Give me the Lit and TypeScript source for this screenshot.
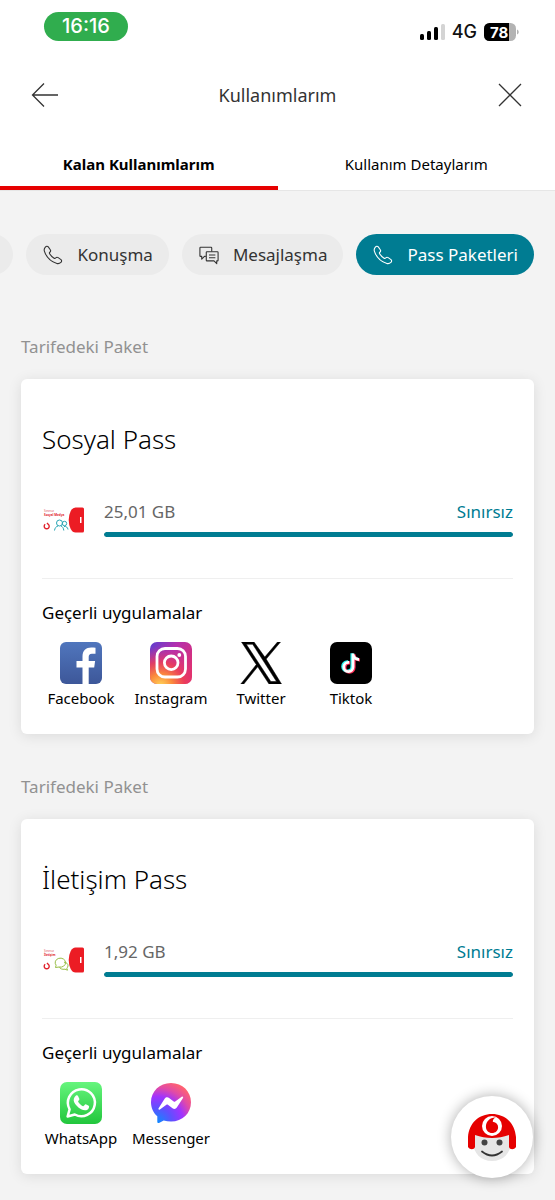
import { LitElement, html, css, svg } from "lit";
import { customElement, property, state } from "lit/decorators.js";

const phoneIcon = html`<svg class="icon" viewBox="0 0 22 22" aria-hidden="true">
  <path d="M2.6 2.3C3.6 1.2 5 1.1 5.8 2.1L8 5.2c.7 1 .5 2-.5 2.8-.6.5-.6 1-.2 1.6 1.200 2 2.900 3.700 4.900 4.900.7.4 1.200.4 1.700-.2.8-.9 1.800-1.100 2.800-.4l3.100 2.200c1 .8.900 2.100-.1 3-1.200 1.100-2.700 1.700-4.400 1.200C8.700 18.300 3.500 12.900 1.500 6.700 1 5 1.500 3.500 2.600 2.300Z" />
</svg>`;

const chatIcon = html`<svg class="icon" viewBox="0 0 22 22" aria-hidden="true">
  <path d="M7.500 12.500H6L3 15.500v-3H1.700a.7.7 0 0 1-.7-.7V3.200c0-.4.300-.7.700-.7h11.600c.4 0 .7.300.7.7v4" />
  <path d="M8.700 7.500h11.600c.4 0 .7.300.7.700v8.600c0 .4-.300.7-.7.7H19.500v3l-3-3H8.700a.7.7 0 0 1-.7-.7V8.200c0-.4.300-.7.700-.7Z" />
  <path d="M11 11h7M11 14h7" />
</svg>`;

const appIcons: Record<string, unknown> = {
  Facebook: html`<svg class="logo" viewBox="0 0 42 42" aria-hidden="true">
    <defs><linearGradient id="fb" x1="0" y1="0" x2="0" y2="1"><stop offset="0" stop-color="#5076bd" /><stop offset="1" stop-color="#3d5799" /></linearGradient></defs>
    <rect width="42" height="42" rx="6" fill="url(#fb)" />
    <path fill="#fff" d="M22.500 42V25.500h-6V19h6v-4.500C22.500 8.500 26 5.500 31.200 5.500c1.600 0 3.100.1 4.300.3v5.900h-3.500c-2.600 0-3.300 1.300-3.300 3.300v4h6.400l-.9 6.500h-5.500V42Z" />
  </svg>`,
  Instagram: html`<svg class="logo" viewBox="0 0 42 42" aria-hidden="true">
    <defs>
      <linearGradient id="ig1" x1="0" y1="0" x2="1" y2=".7"><stop offset="0" stop-color="#5c3fd0" /><stop offset=".45" stop-color="#b32fae" /><stop offset="1" stop-color="#e2306c" /></linearGradient>
      <radialGradient id="ig2" cx=".25" cy="1.050" r=".95"><stop offset="0" stop-color="#ffd95a" /><stop offset=".3" stop-color="#fb8a3c" /><stop offset=".6" stop-color="#ee3f55" stop-opacity=".85" /><stop offset="1" stop-color="#d62f8a" stop-opacity="0" /></radialGradient>
    </defs>
    <rect width="42" height="42" rx="7" fill="url(#ig1)" />
    <rect width="42" height="42" rx="7" fill="url(#ig2)" />
    <rect x="7" y="6.500" width="28.500" height="28.500" rx="8" fill="none" stroke="#fff" stroke-width="2.800" />
    <circle cx="21.200" cy="20.800" r="6.800" fill="none" stroke="#fff" stroke-width="2.800" />
    <circle cx="29.300" cy="13" r="1.900" fill="#fff" />
  </svg>`,
  Twitter: html`<svg class="logo" viewBox="0 0 42 42" aria-hidden="true">
    <path stroke="#000" stroke-width=".5" d="M1.500 0h12.500l10.800 15.100L37.500 0h3L26.200 17.100 41.500 42H29L17.700 24.700 3.800 42H.8L16.300 22.600Zm4.800 2.300 24.500 37.200h5.700L12.700 2.300Z" fill-rule="evenodd" />
  </svg>`,
  Tiktok: html`<svg class="logo" viewBox="0 0 42 42" aria-hidden="true">
    <rect width="42" height="42" rx="7" />
    <g fill="none" stroke-width="3.200">
      <path stroke="#25f4ee" d="M22 11.300v13.200a4.600 4.600 0 1 1-4.600-4.600h.8M22 12c.6 2.900 2.800 4.800 6 5" />
      <path stroke="#fe2c55" d="M24 12.300v13.200A4.600 4.600 0 1 1 19.400 20.900h.8M24 13c.6 2.900 2.800 4.800 6 5" />
      <path stroke="#fff" stroke-width="2.800" d="M23 11.500V25a4.600 4.600 0 1 1-4.600-4.600h.8M23 12.500c.6 2.900 2.800 4.800 6 5" />
    </g>
  </svg>`,
  WhatsApp: html`<svg class="logo" viewBox="0 0 42 42" aria-hidden="true">
    <defs><linearGradient id="wa" x1="0" y1="0" x2="0" y2="1"><stop offset="0" stop-color="#66f57d" /><stop offset="1" stop-color="#22c63c" /></linearGradient></defs>
    <rect width="42" height="42" rx="7" fill="url(#wa)" />
    <path fill="none" stroke="#fff" stroke-width="2.500" stroke-linejoin="round" d="m7.600 34.500 2-7.200a13.500 13.500 0 1 1 5.200 5.200Z" />
    <path fill="#fff" d="M16 13.500c.5-.5 1.500-.5 1.900.2l1.500 3.200c.3.700-1.300 2-1.300 2.600 0 .8 3.300 4.300 5.100 4.700.7.200 1.700-2 2.400-1.900.5 0 3 1.300 3.300 1.600.6.600-.1 3-1.500 3.800-1.900 1.100-4.200.5-6.300-.5-3.400-1.600-6-5-6.900-6.900-1.100-2.400-.4-4.800 1.800-6.800Z" />
  </svg>`,
  Messenger: html`<svg class="logo" viewBox="0 0 42 42" aria-hidden="true">
    <defs><radialGradient id="ms" cx=".15" cy="1" r="1.100"><stop offset="0" stop-color="#0a8dff" /><stop offset=".35" stop-color="#5f50ff" /><stop offset=".6" stop-color="#a033ff" /><stop offset=".8" stop-color="#e04aa8" /><stop offset="1" stop-color="#ff6270" /></radialGradient></defs>
    <path fill="url(#ms)" d="M21 1C9.500 1 1 9.400 1 20.300c0 5.700 2.300 10.600 6.300 14v5.500c0 1 .9 1.500 1.700 1.100l4.700-2.400c2.300.7 4.700 1.100 7.300 1.100 11.500 0 20-8.400 20-19.300S32.500 1 21 1Z" />
    <path fill="#fff" d="m8.600 26.200 6.200-9.600c1-1.600 2.800-1.800 4.300-.7l4.600 3.500c.5.300 1 .3 1.500 0l6.500-4.700c1-.7 1.900.3 1.300 1.200l-6.200 9.600c-1 1.600-2.800 1.800-4.300.7l-4.600-3.500c-.5-.3-1-.3-1.500 0l-6.500 4.700c-1 .7-1.900-.2-1.300-1.200Z" />
  </svg>`,
};

const packArt = (line: string, art: unknown) => html`<svg class="art" viewBox="0 0 42 30" aria-hidden="true">
  <text class="art-small" x="2" y="7">Sınırsız</text>
  <text class="art-small art-name" x="2" y="11">${line}</text>
  <path fill="none" stroke="#e0202a" stroke-width="1.400" d="M3.200 19.300a2.500 2.500 0 1 0 3 0L5 18" />
  ${art}
  <path fill="#ec1c24" d="M33.500 2.500h7q1.500 0 1.500 1.500v22q0 1.500-1.500 1.500h-7q-3 0-4.800-3.500-2-4-2-9t2-9q1.800-3.500 4.800-3.500Z" />
  <path fill="#fff" d="M38 12h1.500v6H38z" />
</svg>`;

const people = svg`<g fill="none" stroke="#2aa6b5" stroke-width="1"><circle cx="17.500" cy="18" r="3" /><circle cx="22.500" cy="18.500" r="2.200" /><path d="M12.500 25.500c.4-2.500 1.500-4 3.500-4.500M19 21c1.500.500 2.500 2 2.800 4.500M22 21.500c2.200-.5 3.700 1 4 3" /></g>`;
const bubbles = svg`<g fill="none" stroke="#97bd45" stroke-width="1"><path d="M13.500 22.500l.6-2.300a5.200 4.500 0 1 1 3 1.800Z" /><path d="M22 17.200c3 .3 4.200 2 4 3.700-.1 1-.6 1.800-1.200 2.300l.7 2-2.500-1c-3 .5-5-.6-5.500-2" /></g>`;

interface Pack {
  title: string;
  used: string;
  limit: string;
  line: string;
  art: unknown;
  percent: number;
  apps: string[];
}

const packs: Pack[] = [
  { title: "Sosyal Pass", used: "25,01 GB", limit: "Sınırsız", line: "Sosyal Medya", art: people, percent: 100, apps: ["Facebook", "Instagram", "Twitter", "Tiktok"] },
  { title: "İletişim Pass", used: "1,92 GB", limit: "Sınırsız", line: "İletişim", art: bubbles, percent: 100, apps: ["WhatsApp", "Messenger"] },
];

@customElement("pack-card")
class PackCard extends LitElement {
  @property({ attribute: false }) pack!: Pack;

  static styles = css`
    :host { display: block; }
    .card { background: #fff; border-radius: 6px; padding: 39px 21px 24px; box-shadow: 0 2px 14px rgba(0, 0, 0, 0.1); }
    .title { margin: 0; font-size: 26px; line-height: 42px; font-weight: 300; color: #000; }
    .usage { display: grid; grid-template-columns: 42px 1fr; column-gap: 20px; margin-top: 38px; align-items: start; }
    .art { width: 42px; height: 30px; margin-top: 7px; display: block; }
    .art-small { font-size: 3px; fill: #e0505a; }
    .art-name { font-weight: 700; fill: #e0202a; }
    .row { display: flex; justify-content: space-between; font-size: 17px; line-height: 28px; }
    .used { color: #666; }
    .limit { color: #007c92; }
    .track { height: 5px; border-radius: 3px; margin-top: 6px; background: #ddd; overflow: hidden; }
    .fill { height: 100%; border-radius: 3px; background: #007c92; }
    .valid { border-top: 1px solid #efefef; margin-top: 41px; padding-top: 20px; }
    .sub { margin: 0; font-size: 17px; line-height: 28px; font-weight: 400; color: #000; }
    .apps { display: flex; gap: 12px; margin: 15px 0 0; padding: 0; list-style: none; }
    .app { width: 78px; display: flex; flex-direction: column; align-items: center; font-size: 15px; line-height: 24px; white-space: nowrap; color: #000; }
    .logo { width: 42px; height: 42px; display: block; margin-bottom: 2px; }
  `;

  render() {
    const p = this.pack;
    return html`<article class="card">
      <h2 class="title">${p.title}</h2>
      <div class="usage">
        ${packArt(p.line, p.art)}
        <div>
          <div class="row"><span class="used">${p.used}</span><span class="limit">${p.limit}</span></div>
          <div class="track"><div class="fill" style="width:${p.percent}%"></div></div>
        </div>
      </div>
      <div class="valid">
        <h3 class="sub">Geçerli uygulamalar</h3>
        <ul class="apps">${p.apps.map((a) => html`<li class="app">${appIcons[a]}${a}</li>`)}</ul>
      </div>
    </article>`;
  }
}

@customElement("app-root")
class AppRoot extends LitElement {
  @state() private tab = 0;
  @state() private chip = 2;

  static styles = css`
    :host { display: block; min-height: 100vh; background: #f3f3f3; font-family: "Noto Sans", sans-serif; color: #333; }
    button { font: inherit; border: 0; background: none; padding: 0; margin: 0; color: inherit; cursor: pointer; }
    .top { background: #fff; border-bottom: 1px solid #e6e6e6; }
    .status { display: flex; justify-content: space-between; align-items: flex-start; padding: 12px 36px 0 44px; height: 53px; box-sizing: border-box; font-family: Inter, sans-serif; }
    .time { background: #30ad4e; color: #fff; border-radius: 15px; padding: 0 18px; font-size: 20px; line-height: 29px; font-weight: 500; }
    .signals { display: flex; align-items: center; gap: 7px; margin-top: 8px; line-height: 24px; font-size: 18px; font-weight: 500; color: #111; }
    .bars { width: 26px; height: 16px; }
    .battery { width: 35px; height: 18px; }
    .pct { font-size: 15px; font-weight: 700; fill: #fff; }
    .head { display: grid; grid-template-columns: 48px 1fr 48px; align-items: center; height: 84px; padding: 0 21px; }
    .nav { display: flex; align-items: center; justify-content: center; height: 48px; }
    .stroke { width: 28px; height: 28px; fill: none; stroke: #333; stroke-width: 1.3; }
    .heading { margin: 0; text-align: center; font-size: 18px; line-height: 28px; font-weight: 400; }
    .tabs { display: grid; grid-template-columns: 1fr 1fr; }
    .tab { height: 53px; padding-top: 5px; font-size: 15px; line-height: 24px; color: #000; border-bottom: 4px solid transparent; }
    .tab.on { font-weight: 700; border-bottom-color: #e60000; }
    .chips { display: flex; justify-content: flex-end; gap: 13px; overflow: hidden; padding: 43px 21px 0 0; }
    .chip { flex: none; display: flex; align-items: center; gap: 14px; height: 41px; padding: 0 16px 0 17px; border-radius: 21px; background: #ebebeb; font-size: 17px; white-space: nowrap; }
    .chip.on { background: #007c92; color: #fff; }
    .chip.cut { width: 144px; box-sizing: border-box; }
    .icon { width: 20px; height: 20px; fill: none; stroke: currentColor; stroke-width: 1.2; stroke-linejoin: round; }
    .list { padding: 58px 21px 26px; display: grid; gap: 39px; }
    .label { margin: 0 0 18px; font-size: 17px; line-height: 28px; font-weight: 400; color: #919191; }
    .bot { position: fixed; right: 22px; bottom: 22px; width: 82px; height: 82px; border-radius: 50%; background: #fff; box-shadow: 0 0 14px rgba(0, 0, 0, 0.32); }
    .face { width: 82px; height: 82px; display: block; }
  `;

  render() {
    const chips = [
      { name: "Konuşma", icon: phoneIcon },
      { name: "Mesajlaşma", icon: chatIcon },
      { name: "Pass Paketleri", icon: phoneIcon },
    ];
    return html`
      <header class="top">
        <div class="status">
          <span class="time">16:16</span>
          <div class="signals">
            <svg class="bars" viewBox="0 0 26 16" aria-hidden="true">
              <rect x="1" y="10" width="4" height="6" rx="1.500" /><rect x="8" y="7" width="4" height="9" rx="1.500" /><rect x="15" y="3" width="4" height="13" rx="1.500" /><rect x="22" y="0" width="4" height="16" rx="1.500" fill="#d4d4d4" />
            </svg>
            <span>4G</span>
            <svg class="battery" viewBox="0 0 35 18" role="img">
              <defs><clipPath id="lvl"><rect width="25" height="18" /></clipPath></defs>
              <rect width="32" height="18" rx="5.500" fill="#b3b3b3" />
              <rect width="32" height="18" rx="5.500" clip-path="url(#lvl)" />
              <path fill="#b3b3b3" d="M33 6.500c2.300.8 2.300 4.200 0 5Z" />
              <text class="pct" x="6" y="14.500">78</text>
            </svg>
          </div>
        </div>
        <div class="head">
          <button class="nav" aria-label="Geri"><svg class="stroke" viewBox="0 0 28 28"><path d="M27 14H1.500M13 2.500 1.500 14 13 25.500" /></svg></button>
          <h1 class="heading">Kullanımlarım</h1>
          <button class="nav" aria-label="Kapat"><svg class="stroke" viewBox="0 0 28 28"><path d="M3 3l22 22M25 3 3 25" /></svg></button>
        </div>
        <nav class="tabs">
          ${["Kalan Kullanımlarım", "Kullanım Detaylarım"].map(
            (t, i) => html`<button class="tab ${this.tab === i ? "on" : ""}" @click=${() => (this.tab = i)}>${t}</button>`
          )}
        </nav>
      </header>
      <div class="chips">
        <span class="chip cut"></span>
        ${chips.map(
          (c, i) => html`<button class="chip ${this.chip === i ? "on" : ""}" @click=${() => (this.chip = i)}>${c.icon}${c.name}</button>`
        )}
      </div>
      <main class="list">
        ${packs.map((p) => html`<section><p class="label">Tarifedeki Paket</p><pack-card .pack=${p}></pack-card></section>`)}
      </main>
      <button class="bot" aria-label="Asistan">
        <svg class="face" viewBox="0 0 82 82">
          <path fill="#e6e6e6" d="M22 36h38v10c0 11-8 19-19 19s-19-8-19-19Z" />
          <path fill="#e60000" d="M17 51V41C18 27 28 18 41 18s23 9 24 23v10c-2 3-6 3-7 0V39c-11 4-23 4-34 0v12c-1 3-5 3-7 0Z" />
          <circle cx="41" cy="30" r="10" fill="#fff" />
          <path fill="#e60000" d="M45 21.500c-2 .5-3.300 2.300-3.200 4.200 3.600.7 5.500 3 5.300 5.800-.2 3.300-2.700 5.500-6 5.500-3.500 0-6.200-2.600-6.200-6.500 0-5 4.500-9.500 10.100-9Z" />
          <circle cx="33.500" cy="46.500" r="3" fill="#444" /><circle cx="48.500" cy="46.500" r="3" fill="#444" />
          <path fill="none" stroke="#333" stroke-width="1.800" stroke-linecap="round" d="M31 55.500q10 8 20 0" />
        </svg>
      </button>
    `;
  }
}
